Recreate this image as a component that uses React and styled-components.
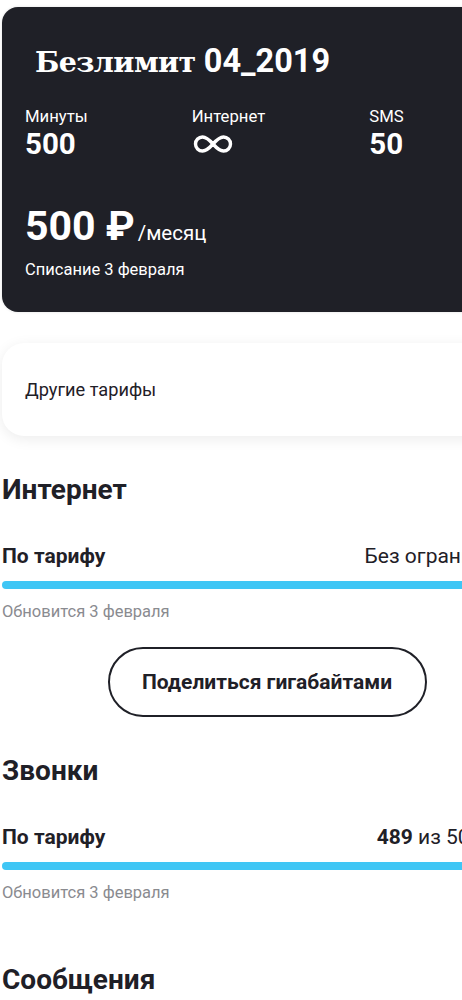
import React from "react";
import styled, { createGlobalStyle } from "styled-components";

const Global = createGlobalStyle`
  html, body {
    margin: 0;
    padding: 0;
    background: #ffffff;
    overflow: hidden;
  }
  body {
    font-family: Roboto, "Noto Sans", sans-serif;
    color: #1f2027;
  }
`;

const Page = styled.div`
  width: 530px;
  padding: 7px 0 0 2px;
  display: flex;
  flex-direction: column;
`;

const TariffCard = styled.div`
  background: #1f2027;
  border-radius: 16px;
  padding: 0 23px;
  height: 305px;
  box-sizing: border-box;
  color: #ffffff;
  box-shadow: 0 0 3px rgba(0, 0, 0, 0.12);
  display: flex;
  flex-direction: column;
`;

const Title = styled.h1`
  margin: 35px 0 0 10px;
  font-family: Roboto, sans-serif;
  font-weight: 700;
  font-size: 32.5px;
  line-height: 38px;
`;

const TitleSerif = styled.span`
  font-family: "DejaVu Serif", serif;
  font-size: 28.5px;
  letter-spacing: -0.6px;
`;

const Stats = styled.div`
  display: flex;
  gap: 104px;
  margin-top: 26px;
`;

const Stat = styled.div`
  display: flex;
  flex-direction: column;
`;

const StatLabel = styled.span`
  font-size: 16.7px;
  line-height: 20px;
`;

const StatValue = styled.span`
  font-size: 29.5px;
  font-weight: 700;
  line-height: 34px;
  height: 34px;
  display: flex;
  align-items: center;
`;

const Price = styled.div`
  margin-top: 43px;
  display: flex;
  align-items: baseline;
`;

const PriceAmount = styled.span`
  font-size: 41px;
  font-weight: 700;
  line-height: 44px;
`;

const PricePeriod = styled.span`
  font-size: 20.5px;
  line-height: 24px;
  margin-left: 3px;
`;

const Charge = styled.div`
  margin-top: 12px;
  font-size: 16.5px;
  line-height: 20px;
`;

const LinkCard = styled.div`
  margin-top: 31px;
  height: 93px;
  border-radius: 22px;
  background: #ffffff;
  box-shadow: 0 3px 14px rgba(0, 0, 0, 0.08);
  display: flex;
  align-items: center;
  padding: 0 25px 0 23px;
  box-sizing: border-box;
  font-size: 18.2px;
`;

const Section = styled.section`
  display: flex;
  flex-direction: column;
  margin-top: ${(p) => p.$top}px;
`;

const SectionTitle = styled.h2`
  margin: 0;
  font-size: 28px;
  font-weight: 700;
  line-height: 34px;
`;

const UsageRow = styled.div`
  display: flex;
  justify-content: space-between;
  align-items: baseline;
  margin-top: 36px;
  font-size: 21px;
  line-height: 26px;
`;

const UsageLabel = styled.span`
  font-weight: 700;
`;

const UsageValue = styled.span`
  white-space: nowrap;
  b {
    font-weight: 700;
  }
`;

const Bar = styled.div`
  margin-top: 12px;
  height: 8px;
  border-radius: 4px;
  background: #3fc6f5;
`;

const Note = styled.div`
  margin-top: 12px;
  font-size: 16.5px;
  line-height: 22px;
  color: #8a8b90;
`;

const ShareButton = styled.button`
  align-self: center;
  margin-top: 24px;
  width: 319px;
  height: 70px;
  border: 2px solid #1f2027;
  border-radius: 35px;
  background: #ffffff;
  font-family: inherit;
  font-size: 21px;
  font-weight: 700;
  color: #1f2027;
`;

const InfinityIcon = () => (
  <svg width="42" height="18" viewBox="0 0 42 18" fill="none">
    <path
      d="M21 9C17 4.5 14 2 10.5 2a7 7 0 0 0 0 14C14 16 17 13.5 21 9s7-7 10.5-7a7 7 0 0 1 0 14C28 16 25 13.5 21 9z"
      stroke="#fff"
      strokeWidth="3.4"
      strokeLinejoin="round"
    />
  </svg>
);

export default function App() {
  return (
    <>
      <Global />
      <Page>
        <TariffCard>
          <Title>
            <TitleSerif>Безлимит</TitleSerif> 04_2019
          </Title>
          <Stats>
            <Stat>
              <StatLabel>Минуты</StatLabel>
              <StatValue>500</StatValue>
            </Stat>
            <Stat>
              <StatLabel>Интернет</StatLabel>
              <StatValue>
                <InfinityIcon />
              </StatValue>
            </Stat>
            <Stat>
              <StatLabel>SMS</StatLabel>
              <StatValue>50</StatValue>
            </Stat>
          </Stats>
          <Price>
            <PriceAmount>500 ₽</PriceAmount>
            <PricePeriod>/месяц</PricePeriod>
          </Price>
          <Charge>Списание 3 февраля</Charge>
        </TariffCard>

        <LinkCard>Другие тарифы</LinkCard>

        <Section $top={37}>
          <SectionTitle>Интернет</SectionTitle>
          <UsageRow>
            <UsageLabel>По тарифу</UsageLabel>
            <UsageValue>Без ограничений</UsageValue>
          </UsageRow>
          <Bar />
          <Note>Обновится 3 февраля</Note>
          <ShareButton>Поделиться гигабайтами</ShareButton>
        </Section>

        <Section $top={37}>
          <SectionTitle>Звонки</SectionTitle>
          <UsageRow>
            <UsageLabel>По тарифу</UsageLabel>
            <UsageValue>
              <b>489</b> из 500 мин.
            </UsageValue>
          </UsageRow>
          <Bar />
          <Note>Обновится 3 февраля</Note>
        </Section>

        <Section $top={59}>
          <SectionTitle>Сообщения</SectionTitle>
        </Section>
      </Page>
    </>
  );
}
